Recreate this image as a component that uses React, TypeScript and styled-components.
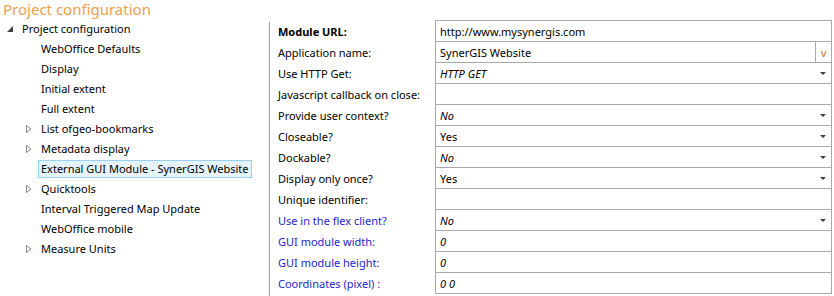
import styled, { createGlobalStyle } from "styled-components";

const GlobalStyle = createGlobalStyle`
    html, body {
        margin: 0;
        padding: 0;
        background: #ffffff;
    }
    body {
        font-family: "Noto Sans", Lato, sans-serif;
        font-size: 11px;
        color: #000000;
    }
`;

const Page = styled.div`
    width: 834px;
    height: 296px;
    overflow: hidden;
    display: flex;
    flex-direction: column;
`;

const Title = styled.h1`
    margin: 0;
    height: 19px;
    padding-left: 3px;
    font-size: 15px;
    font-weight: 400;
    line-height: 19px;
    color: #f0a04b;
    white-space: nowrap;
`;

const Body = styled.div`
    display: flex;
    flex: 1;
`;

const Tree = styled.ul`
    list-style: none;
    margin: 0;
    padding: 0;
    width: 269px;
`;

const Separator = styled.div`
    width: 1px;
    background: #a0a0a0;
    margin-top: 3px;
`;

const TreeItem = styled.li<{ level: number }>`
    height: 20px;
    display: flex;
    align-items: center;
    padding-left: ${p => (p.level === 0 ? 4 : 23)}px;
`;

const Expander = styled.span`
    width: 12px;
    height: 12px;
    margin-right: 3px;
    display: inline-flex;
    align-items: center;
    justify-content: center;
`;

const ItemLabel = styled.span<{ selected?: boolean }>`
    padding: 0 2px;
    line-height: 16px;
    border: 1px solid ${p => (p.selected ? "#99d1f3" : "transparent")};
    background: ${p => (p.selected ? "#e5f3fb" : "transparent")};
    white-space: nowrap;
`;

const Grid = styled.div`
    flex: 1;
    display: flex;
    flex-direction: column;
    padding-top: 1px;
`;

const Row = styled.div`
    display: flex;
    height: 22px;
    margin-top: -1px;

    &:first-child {
        margin-top: 0;
    }
`;

const Label = styled.div<{ bold?: boolean; flex?: boolean }>`
    width: 157px;
    padding-left: 8px;
    display: flex;
    align-items: center;
    font-weight: ${p => (p.bold ? 700 : 400)};
    color: ${p => (p.flex ? "#2424cc" : "#000000")};
    white-space: nowrap;
`;

const Field = styled.div<{ italic?: boolean }>`
    width: 397px;
    display: flex;
    align-items: center;
    border: 1px solid #a9a9a9;
    box-sizing: border-box;
    font-style: ${p => (p.italic ? "italic" : "normal")};
    padding-left: 4px;
`;

const Value = styled.span`
    flex: 1;
    white-space: nowrap;
`;

const ButtonCell = styled.span`
    width: 15px;
    align-self: stretch;
    border-left: 1px solid #a9a9a9;
    display: flex;
    align-items: center;
    justify-content: center;
    font-style: normal;
    font-size: 11px;
    color: #c8741e;
`;

const Arrow = styled.span`
    width: 0;
    height: 0;
    margin-right: 5px;
    border-left: 3px solid transparent;
    border-right: 3px solid transparent;
    border-top: 3px solid #404040;
`;

function Closed() {
    return (
        <svg width="8" height="10" viewBox="0 0 8 10">
            <path d="M1.5 1.5 L6 5 L1.5 8.5 Z" fill="none" stroke="#8a8a8a" strokeWidth="1" />
        </svg>
    );
}

function Open() {
    return (
        <svg width="8" height="8" viewBox="0 0 8 8">
            <path d="M7 1 L7 7 L1 7 Z" fill="#404040" />
        </svg>
    );
}

type TreeNode = { label: string; level: number; expander?: "open" | "closed"; selected?: boolean };

const nodes: TreeNode[] = [
    { label: "Project configuration", level: 0, expander: "open" },
    { label: "WebOffice Defaults", level: 1 },
    { label: "Display", level: 1 },
    { label: "Initial extent", level: 1 },
    { label: "Full extent", level: 1 },
    { label: "List ofgeo-bookmarks", level: 1, expander: "closed" },
    { label: "Metadata display", level: 1, expander: "closed" },
    { label: "External GUI Module - SynerGIS Website", level: 1, selected: true },
    { label: "Quicktools", level: 1, expander: "closed" },
    { label: "Interval Triggered Map Update", level: 1 },
    { label: "WebOffice mobile", level: 1 },
    { label: "Measure Units", level: 1, expander: "closed" },
];

type Prop = {
    label: string;
    value: string;
    bold?: boolean;
    flex?: boolean;
    italic?: boolean;
    kind?: "dropdown" | "button";
};

const props: Prop[] = [
    { label: "Module URL:", value: "http://www.mysynergis.com", bold: true },
    { label: "Application name:", value: "SynerGIS Website", kind: "button" },
    { label: "Use HTTP Get:", value: "HTTP GET", italic: true, kind: "dropdown" },
    { label: "Javascript callback on close:", value: "" },
    { label: "Provide user context?", value: "No", italic: true, kind: "dropdown" },
    { label: "Closeable?", value: "Yes", kind: "dropdown" },
    { label: "Dockable?", value: "No", italic: true, kind: "dropdown" },
    { label: "Display only once?", value: "Yes", kind: "dropdown" },
    { label: "Unique identifier:", value: "" },
    { label: "Use in the flex client?", value: "No", italic: true, flex: true, kind: "dropdown" },
    { label: "GUI module width:", value: "0", italic: true, flex: true },
    { label: "GUI module height:", value: "0", italic: true, flex: true },
    { label: "Coordinates (pixel) :", value: "0 0", italic: true, flex: true },
];

export default function App() {
    return (
        <>
            <GlobalStyle />
            <Page>
                <Title>Project configuration</Title>
                <Body>
                    <Tree>
                        {nodes.map(n => (
                            <TreeItem key={n.label} level={n.level}>
                                <Expander>
                                    {n.expander === "open" && <Open />}
                                    {n.expander === "closed" && <Closed />}
                                </Expander>
                                <ItemLabel selected={n.selected}>{n.label}</ItemLabel>
                            </TreeItem>
                        ))}
                    </Tree>
                    <Separator />
                    <Grid>
                        {props.map(p => (
                            <Row key={p.label}>
                                <Label bold={p.bold} flex={p.flex}>{p.label}</Label>
                                <Field italic={p.italic}>
                                    <Value>{p.value}</Value>
                                    {p.kind === "dropdown" && <Arrow />}
                                    {p.kind === "button" && <ButtonCell>v</ButtonCell>}
                                </Field>
                            </Row>
                        ))}
                    </Grid>
                </Body>
            </Page>
        </>
    );
}
